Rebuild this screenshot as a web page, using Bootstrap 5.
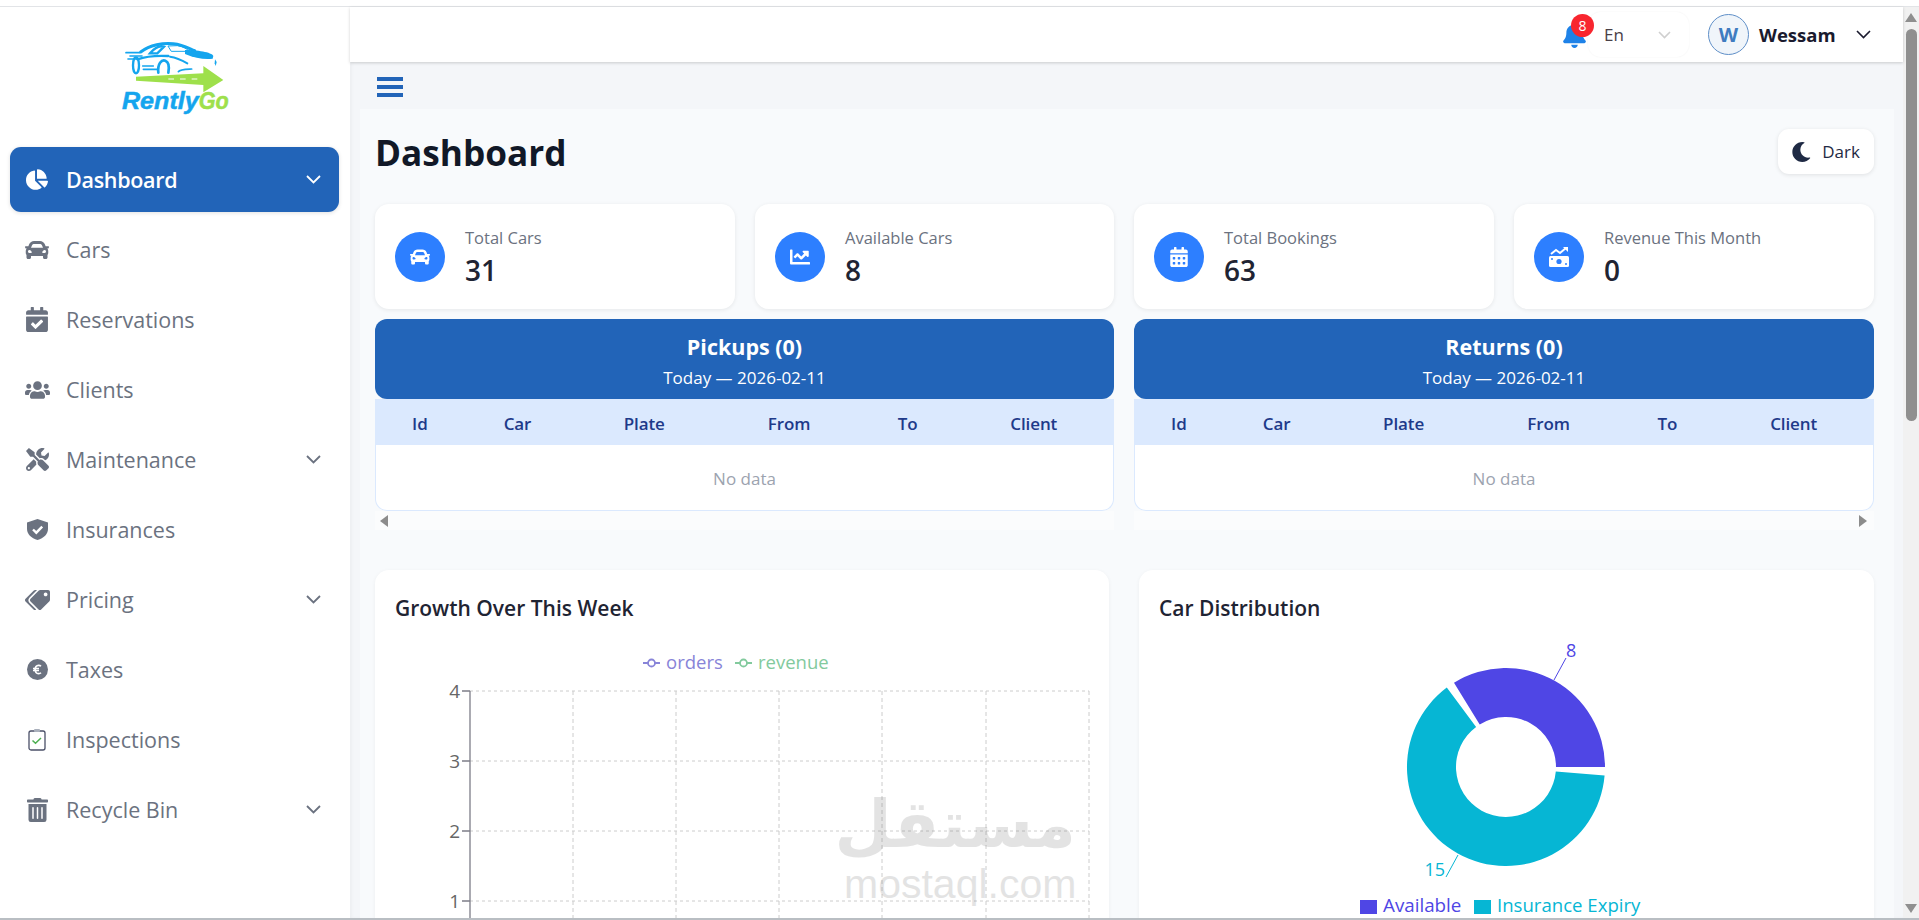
<!DOCTYPE html>
<html lang="en">
<head>
<meta charset="utf-8">
<title>RentlyGo Dashboard</title>
<link href="https://cdn.jsdelivr.net/npm/bootstrap@5.3.0/dist/css/bootstrap.min.css" rel="stylesheet">
<style>
html,body{height:920px;overflow:hidden;background:#fff}
body{font-family:"Open Sans","Noto Sans",sans-serif;color:#1f2433}
.frame-top{height:7px;border-bottom:1px solid #e2e4e7;background:#fff}
.frame-bottom{height:2px;background:#b9bec3}
.shell{height:911px}
.side{width:350px;background:#fff;flex:none}
.side-logo{height:140px;padding-top:23px}
.side-logo svg{display:block;margin:0 auto}
.side-menu{gap:5px;padding:0 11px 0 10px}
.side-link{height:65px;border-radius:11px;color:#6b7280;font-size:21.5px;font-weight:500;padding:0 18px 0 12px}
.side-link:hover{color:#6b7280}
.side-link .flex-grow-1{padding-top:1px}
.side-link.on,.side-link.on:hover{background:#2264b8;color:#fff;box-shadow:0 1px 4px rgba(0,0,0,.12);font-weight:600;letter-spacing:-.3px}
.side-ico{width:30px;height:30px;margin-right:14px;flex:none}
.side-ico svg{display:block}
.main-col{min-width:0;background:#f4f6f9;box-shadow:inset 2px 0 3px rgba(0,0,0,.03)}
.top-bar{height:55px;background:#fff;box-shadow:0 1px 3px rgba(0,0,0,.18);padding-right:32px;position:relative;z-index:2}
.bell-wrap{width:25px;height:26px;position:relative}
.bell-num{position:absolute;left:8px;top:-8px;width:23px;height:23px;border-radius:50%;background:#f8262f;color:#fff;font-size:14px;line-height:23px;text-align:center;z-index:3}
.lang-box{width:101px;height:45px;border-radius:13px;background:#fff;box-shadow:0 0 2px rgba(0,0,0,.06);padding:0 18px 0 16px;font-size:17px;color:#4a4047;margin-right:19px}
.user-ava{width:41px;height:41px;border-radius:50%;border:1.5px solid #5f8fc8;background:#f0f5fa;color:#3f7cc0;font-weight:700;font-size:20px;margin-right:10px}
.user-name{font-size:18.5px;font-weight:700;color:#1a1a2e;width:97px}
.burger-row{height:47px;padding:15px 0 0 27px}
.burger{width:26px;height:20px;gap:4px}
.burger i{display:block;height:4px;background:#2264b8}
.panel{margin:0 9px 0 10px;background:#f8fafc;padding:20px 20px 0 15px;height:809px;overflow:hidden}
.page-head{height:45px;margin-bottom:30px}
.page-title{font-size:35.2px;font-weight:700;color:#111827;margin:0;line-height:45px;padding:2px 0 0}
.mode-btn{width:96px;height:45px;border-radius:11px;background:#fff;border:0;box-shadow:0 1px 4px rgba(0,0,0,.1);font-size:17px;color:#1f2a44;gap:11px}
.stat-grid{display:grid;grid-template-columns:360px 359px 360px 360px;column-gap:20px;margin-bottom:10px}
.stat-box{height:105px;border:0;border-radius:14px;background:#fff;box-shadow:0 1px 4px rgba(0,0,0,.08);padding:0 20px;flex-direction:row;align-items:center}
.stat-ico{width:50px;height:50px;border-radius:50%;background:#2d7fff;margin-right:20px;flex:none}
.stat-label{font-size:16.5px;color:#6b7280;line-height:24px}
.stat-val{font-size:28px;font-weight:600;color:#1f2433;line-height:36px;margin-top:2px}
.today-grid{display:grid;grid-template-columns:739px 740px;column-gap:20px;margin-bottom:40px}
.today-head{height:80px;background:#2264b8;border-radius:12px;color:#fff;padding-top:14px}
.today-title{font-size:21.5px;font-weight:700;line-height:28px;margin:0}
.today-sub{font-size:17px;line-height:26px;margin-top:4px}
.today-wrap{background:#fff;border:1px solid #dbe9fe;border-top:0;border-radius:0 0 12px 12px;overflow:hidden;height:112px}
.today-table{table-layout:fixed;margin:0;width:100%}
.today-table th{height:46px;background:#dbe9fe;color:#1e3a8a;font-size:17px;font-weight:600;text-align:center;vertical-align:middle;border:0;padding:3px 0 0;letter-spacing:-.1px}
.today-table td{height:66px;text-align:center;vertical-align:middle;border:0;padding:1px 0 0;color:#9ca3af;font-size:17px}
.w-a{width:11.9%}.w-b{width:14.6%}.w-c{width:19.8%}.w-d{width:19.5%}.w-e{width:12.7%}.w-f{width:21.5%}
.hscroll{height:19px;background:#fbfcfd;padding:0 7px 0 5px}
.tri-l{width:0;height:0;border-style:solid;border-width:6px 8px 6px 0;border-color:transparent #8c8c8c transparent transparent}
.tri-r{width:0;height:0;border-style:solid;border-width:6px 0 6px 8px;border-color:transparent transparent transparent #8c8c8c}
.chart-grid{display:grid;grid-template-columns:734px 735px;column-gap:30px}
.chart-box{height:420px;border:0;border-radius:14px;background:#fff;box-shadow:0 1px 4px rgba(0,0,0,.05);position:relative;overflow:hidden}
.chart-title{font-size:21px;font-weight:600;color:#1f2433;line-height:28px;margin:0;padding:24px 0 0 20px;height:70px}
.chart-box svg text{font-family:"Open Sans","Noto Sans",sans-serif}
.wm{position:absolute;left:469px;top:227px;width:232px;text-align:center;color:#777;opacity:.2;pointer-events:none}
.wm-ar{font-family:"DejaVu Sans",sans-serif;font-weight:700;font-size:66px;line-height:56px;height:70px;white-space:nowrap;direction:rtl}
.wm-en{font-family:"Liberation Sans",sans-serif;font-size:41px;line-height:34px;white-space:nowrap}
.vscroll{width:16px;background:#f1f1f1;flex:none;padding:6px 0 5px}
.vbar{width:11px;height:392px;background:#8f8f8f;border-radius:6px;margin-top:7px}
.tri-u{width:0;height:0;border-style:solid;border-width:0 6px 9px 6px;border-color:transparent transparent #8f8f8f transparent}
.tri-d{width:0;height:0;border-style:solid;border-width:9px 6px 0 6px;border-color:#8f8f8f transparent transparent transparent}
</style>
</head>
<body>
<div class="frame-top"></div>
<div class="shell d-flex">
  <aside class="side">
    <div class="side-logo">
      <svg width="150" height="95" viewBox="0 0 450 285">
        <g fill="none" stroke="#14a5ee" stroke-linecap="round">
          <path d="M122 66C150 44 190 38 220 41C250 44 268 56 284 62" stroke-width="9"/>
          <path d="M150 70C165 52 180 46 192 50L172 70Z" stroke-width="7"/>
          <path d="M205 48L232 47C250 50 262 58 270 64L215 64Z" stroke-width="3"/>
          <ellipse cx="108" cy="106" rx="9" ry="24" stroke-width="7"/>
          <path d="M175 128C172 100 185 88 196 92C206 96 208 112 205 128" stroke-width="8"/>
          <path d="M78 68H118M90 78H126M84 87H112M130 118H172M128 108H160M235 125C240 118 255 118 275 117" stroke-width="5"/>
          <path d="M210 80C225 82 245 90 262 100" stroke-width="6"/>
          <path d="M112 88C135 80 170 76 205 78" stroke-width="7"/>
        </g>
        <path d="M255 60C290 60 335 66 340 78L338 86C315 90 285 84 255 72Z" fill="#14a5ee"/>
        <path d="M345 88L350 96L347 108L344 100Z" fill="#14a5ee"/>
        <path d="M108 140L310 130V108L370 150L310 187V165L108 152Z" fill="#9ee04b"/>
        <path d="M205 147H222M240 147H257M275 147H292" stroke="#fff" stroke-width="3"/>
        <text x="66" y="238" font-family="Liberation Sans, sans-serif" font-weight="700" font-style="italic" font-size="70" fill="#14a5ee" stroke="#14a5ee" stroke-width="1.500" textLength="230" lengthAdjust="spacingAndGlyphs">Rently</text>
        <text x="296" y="238" font-family="Liberation Sans, sans-serif" font-weight="700" font-style="italic" font-size="70" fill="#9ee04b" stroke="#9ee04b" stroke-width="1.500" textLength="90" lengthAdjust="spacingAndGlyphs">Go</text>
      </svg>
    </div>
    <nav class="nav flex-column flex-nowrap side-menu">
      <a class="nav-link side-link on d-flex align-items-center" href="#"><span class="side-ico d-flex align-items-center justify-content-center"><svg width="22" height="21" viewBox="0 0 544 512" fill="#fff"><path d="M527.79 288H290.5l158.03 158.03c6.04 6.04 15.98 6.53 22.19.68 38.7-36.46 65.32-85.61 73.13-140.86 1.34-9.46-6.51-17.85-16.06-17.85zm-15.83-64.8C503.72 103.74 408.26 8.28 288.8.04 279.68-.59 272 7.1 272 16.24V240h223.77c9.14 0 16.82-7.68 16.19-16.8zM224 288V50.71c0-9.55-8.39-17.4-17.84-16.06C86.99 51.49-4.1 155.6.14 280.37 4.5 408.51 114.83 513.59 243.03 511.98c50.4-.63 96.97-16.87 135.26-44.03 7.9-5.6 8.42-17.23 1.57-24.08L224 288z"/></svg></span><span class="flex-grow-1">Dashboard</span><svg width="15" height="9" viewBox="0 0 15 9" fill="none" stroke="#fff" stroke-width="1.8"><path d="M1 1l6.5 6.5L14 1"/></svg></a>
      <a class="nav-link side-link d-flex align-items-center" href="#"><span class="side-ico d-flex align-items-center justify-content-center"><svg width="24" height="24" viewBox="0 0 512 512" fill="#6b7280"><path d="M499.99 176h-59.87l-16.64-41.6C406.38 91.63 365.57 64 319.5 64h-127c-46.06 0-86.88 27.63-103.99 70.4L71.87 176H12.01C4.2 176-1.53 183.34.37 190.91l6 24C7.7 220.25 12.5 224 18.01 224h20.07C24.65 235.73 16 252.78 16 272v48c0 16.12 6.16 30.67 16 41.93V416c0 17.67 14.33 32 32 32h32c17.67 0 32-14.33 32-32v-32h256v32c0 17.67 14.33 32 32 32h32c17.67 0 32-14.33 32-32v-54.07c9.84-11.25 16-25.8 16-41.93v-48c0-19.22-8.65-36.27-22.07-48H494c5.51 0 10.31-3.75 11.64-9.09l6-24c1.89-7.57-3.84-14.91-11.65-14.91zm-352.06-17.83c7.29-18.22 24.94-30.17 44.57-30.17h127c19.63 0 37.28 11.95 44.57 30.17L384 208H128l19.93-49.83zM96 319.8c-19.2 0-32-12.76-32-31.9S76.8 256 96 256s48 28.71 48 47.85-28.8 15.95-48 15.95zm320 0c-19.2 0-48 3.19-48-15.95S396.8 256 416 256s32 12.76 32 31.9-12.8 31.9-32 31.9z"/></svg></span><span class="flex-grow-1">Cars</span></a>
      <a class="nav-link side-link d-flex align-items-center" href="#"><span class="side-ico d-flex align-items-center justify-content-center"><svg width="22" height="25" viewBox="0 0 448 512" fill="#6b7280"><path d="M436 160H12c-6.627 0-12-5.373-12-12v-36c0-26.51 21.49-48 48-48h48V12c0-6.627 5.373-12 12-12h40c6.627 0 12 5.373 12 12v52h128V12c0-6.627 5.373-12 12-12h40c6.627 0 12 5.373 12 12v52h48c26.51 0 48 21.49 48 48v36c0 6.627-5.373 12-12 12zM12 192h424c6.627 0 12 5.373 12 12v260c0 26.51-21.49 48-48 48H48c-26.51 0-48-21.49-48-48V204c0-6.627 5.373-12 12-12zm333.296 95.947l-28.169-28.398c-4.667-4.705-12.265-4.736-16.970-.068L194.12 364.665l-45.98-46.352c-4.667-4.705-12.266-4.736-16.971-.068l-28.397 28.17c-4.705 4.667-4.736 12.265-.068 16.970l82.601 83.269c4.667 4.705 12.265 4.736 16.970.068l142.953-141.805c4.705-4.667 4.736-12.265.068-16.970z"/></svg></span><span class="flex-grow-1">Reservations</span></a>
      <a class="nav-link side-link d-flex align-items-center" href="#"><span class="side-ico d-flex align-items-center justify-content-center"><svg width="25" height="20" viewBox="0 0 640 512" fill="#6b7280"><path d="M96 224c35.3 0 64-28.7 64-64s-28.7-64-64-64-64 28.7-64 64 28.7 64 64 64zm448 0c35.3 0 64-28.7 64-64s-28.7-64-64-64-64 28.7-64 64 28.7 64 64 64zm32 32h-64c-17.6 0-33.5 7.1-45.1 18.6 40.3 22.1 68.9 62 75.1 109.4h66c17.7 0 32-14.3 32-32v-32c0-35.3-28.7-64-64-64zm-256 0c61.9 0 112-50.1 112-112S381.9 32 320 32 208 82.1 208 144s50.1 112 112 112zm76.8 32h-8.3c-20.8 10-43.9 16-68.5 16s-47.6-6-68.5-16h-8.3C179.6 288 128 339.6 128 403.2V432c0 26.5 21.5 48 48 48h288c26.5 0 48-21.5 48-48v-28.8c0-63.6-51.6-115.2-115.2-115.2zm-223.7-13.4C161.5 263.1 145.6 256 128 256H64c-35.3 0-64 28.7-64 64v32c0 17.7 14.3 32 32 32h65.9c6.3-47.4 34.9-87.3 75.2-109.4z"/></svg></span><span class="flex-grow-1">Clients</span></a>
      <a class="nav-link side-link d-flex align-items-center" href="#"><span class="side-ico d-flex align-items-center justify-content-center"><svg width="23" height="23" viewBox="0 0 512 512" fill="#6b7280"><path d="M501.1 395.7L384 278.6c-23.1-23.1-57.6-27.6-85.4-13.9L192 158.1V96L64 0 0 64l96 128h62.1l106.6 106.6c-13.6 27.8-9.2 62.3 13.9 85.4l117.1 117.1c14.6 14.6 38.2 14.6 52.7 0l52.7-52.7c14.5-14.6 14.5-38.2 0-52.7zM331.7 225c28.3 0 54.9 11 74.9 31l19.4 19.4c15.8-6.9 30.8-16.5 43.8-29.5 37.1-37.1 49.7-89.3 37.9-136.7-2.2-9-13.5-12.1-20.1-5.5l-74.4 74.4-67.9-11.3L334 98.9l74.4-74.4c6.6-6.6 3.4-17.9-5.7-20.2-47.4-11.7-99.6.9-136.6 37.9-28.5 28.5-41.9 66.1-41.2 103.6l82.1 82.1c8.1-1.9 16.5-2.9 24.7-2.9zm-103.9 82l-56.7-56.7L18.7 402.8c-25 25-25 65.5 0 90.5s65.5 25 90.5 0l123.6-123.6c-7.6-19.9-9.9-41.6-5-62.7zM64 472c-13.2 0-24-10.8-24-24 0-13.3 10.7-24 24-24s24 10.7 24 24c0 13.2-10.7 24-24 24z"/></svg></span><span class="flex-grow-1">Maintenance</span><svg width="15" height="9" viewBox="0 0 15 9" fill="none" stroke="#6b7280" stroke-width="1.8"><path d="M1 1l6.5 6.5L14 1"/></svg></a>
      <a class="nav-link side-link d-flex align-items-center" href="#"><span class="side-ico d-flex align-items-center justify-content-center"><svg width="21" height="21" viewBox="0 0 21 21"><path d="M10.5 0L21 3.6V10C21 15 16.8 19 10.5 21C4.2 19 0 15 0 10V3.6Z" fill="#6b7280"/><path d="M6 10.5l3.3 3.2L15.2 7.6" fill="none" stroke="#fff" stroke-width="2.4"/></svg></span><span class="flex-grow-1">Insurances</span></a>
      <a class="nav-link side-link d-flex align-items-center" href="#"><span class="side-ico d-flex align-items-center justify-content-center"><svg width="25" height="20" viewBox="0 0 640 512" fill="#6b7280"><g transform="matrix(-1 0 0 1 640 0)"><path d="M497.941 225.941L286.059 14.059A48 48 0 0 0 252.118 0H48C21.49 0 0 21.49 0 48v204.118a48 48 0 0 0 14.059 33.941l211.882 211.882c18.744 18.745 49.136 18.746 67.882 0l204.118-204.118c18.745-18.745 18.745-49.137 0-67.882zM112 160c-26.51 0-48-21.49-48-48s21.49-48 48-48 48 21.49 48 48-21.49 48-48 48zm513.941 133.823L421.823 497.941c-18.745 18.745-49.137 18.745-67.882 0l-.36-.36L527.64 323.522c16.999-16.999 26.36-39.6 26.36-63.64s-9.362-46.641-26.36-63.64L331.397 0h48.721a48 48 0 0 1 33.941 14.059l211.882 211.882c18.745 18.745 18.745 49.137 0 67.882z"/></g></svg></span><span class="flex-grow-1">Pricing</span><svg width="15" height="9" viewBox="0 0 15 9" fill="none" stroke="#6b7280" stroke-width="1.8"><path d="M1 1l6.5 6.5L14 1"/></svg></a>
      <a class="nav-link side-link d-flex align-items-center" href="#"><span class="side-ico d-flex align-items-center justify-content-center"><svg width="21" height="21" viewBox="0 0 21 21"><circle cx="10.5" cy="10.5" r="10.5" fill="#6b7280"/><path d="M14 7.2C12.8 6 10.2 6 9 7.6C7.8 9.2 7.8 11.8 9 13.4C10.2 15 12.8 15 14 13.8M6 9.5H12M6 11.5H12" fill="none" stroke="#fff" stroke-width="1.6"/></svg></span><span class="flex-grow-1">Taxes</span></a>
      <a class="nav-link side-link d-flex align-items-center" href="#"><span class="side-ico d-flex align-items-center justify-content-center"><svg width="18" height="23" viewBox="0 0 18 23"><rect x="1" y="3" width="16" height="19" rx="2" fill="#fff" stroke="#4b5068" stroke-width="1.3"/><rect x="6" y="1" width="6" height="3" rx="1" fill="#aab0bc"/><path d="M4.5 12.5l3 2.8 5.5-5.3" fill="none" stroke="#4caf50" stroke-width="1.5"/></svg></span><span class="flex-grow-1">Inspections</span></a>
      <a class="nav-link side-link d-flex align-items-center" href="#"><span class="side-ico d-flex align-items-center justify-content-center"><svg width="21" height="24" viewBox="0 0 448 512" fill="#6b7280"><path d="M32 464a48 48 0 0 0 48 48h288a48 48 0 0 0 48-48V128H32zm272-256a16 16 0 0 1 32 0v224a16 16 0 0 1-32 0zm-96 0a16 16 0 0 1 32 0v224a16 16 0 0 1-32 0zm-96 0a16 16 0 0 1 32 0v224a16 16 0 0 1-32 0zM432 32H312l-9.4-18.7A24 24 0 0 0 281.1 0H166.8a23.72 23.72 0 0 0-21.4 13.3L136 32H16A16 16 0 0 0 0 48v32a16 16 0 0 0 16 16h416a16 16 0 0 0 16-16V48a16 16 0 0 0-16-16z"/></svg></span><span class="flex-grow-1">Recycle Bin</span><svg width="15" height="9" viewBox="0 0 15 9" fill="none" stroke="#6b7280" stroke-width="1.8"><path d="M1 1l6.5 6.5L14 1"/></svg></a>
    </nav>
  </aside>
  <div class="main-col flex-grow-1">
    <header class="top-bar d-flex align-items-center justify-content-end">
      <div class="bell-wrap"><svg width="23" height="26" viewBox="0 0 448 512" fill="#1e82e8"><path d="M224 512c35.32 0 63.97-28.65 63.97-64H160.03c0 35.35 28.65 64 63.97 64zm215.39-149.71c-19.32-20.76-55.47-51.99-55.47-154.29 0-77.7-54.48-139.9-127.94-155.16V32c0-17.67-14.32-32-31.98-32s-31.98 14.33-31.98 32v20.84C118.56 68.1 64.08 130.3 64.08 208c0 102.3-36.15 133.53-55.47 154.29-6 6.45-8.66 14.16-8.61 21.71.11 16.4 12.98 32 32.1 32h383.8c19.12 0 32-15.6 32.1-32 .05-7.55-2.61-15.27-8.61-21.71z"/></svg><span class="bell-num">8</span></div>
      <div class="lang-box d-flex align-items-center justify-content-between"><span>En</span><svg width="13" height="8" viewBox="0 0 13 8" fill="none" stroke="#cfcfcf" stroke-width="1.6"><path d="M1 1l5.5 5.5L12 1"/></svg></div>
      <div class="user-ava d-flex align-items-center justify-content-center">W</div>
      <div class="user-name">Wessam</div>
      <svg width="15" height="9" viewBox="0 0 15 9" fill="none" stroke="#1a1a2e" stroke-width="1.6"><path d="M1 1l6.5 6.5L14 1"/></svg>
    </header>
    <div class="burger-row"><div class="burger d-flex flex-column"><i></i><i></i><i></i></div></div>
    <main class="panel">
      <div class="page-head d-flex align-items-center justify-content-between">
        <h1 class="page-title">Dashboard</h1>
        <button class="mode-btn d-flex align-items-center justify-content-center" type="button"><svg width="19" height="20" viewBox="27 0 470 512" fill="#1f2a44"><path d="M283.211 512c78.962 0 151.079-35.925 198.857-94.792 7.068-8.708-.639-21.43-11.562-19.35-124.203 23.654-238.262-71.576-238.262-196.954 0-72.222 38.662-138.635 101.498-174.394 9.686-5.512 7.25-20.197-3.756-22.23A258.156 258.156 0 0 0 283.211 0c-141.309 0-256 114.511-256 256 0 141.309 114.511 256 256 256z"/></svg><span>Dark</span></button>
      </div>
      <section class="stat-grid">
        <div class="card stat-box"><div class="stat-ico d-flex align-items-center justify-content-center"><svg width="20" height="20" viewBox="0 0 512 512" fill="#fff"><path d="M499.99 176h-59.87l-16.64-41.6C406.38 91.63 365.57 64 319.5 64h-127c-46.06 0-86.88 27.63-103.99 70.4L71.87 176H12.01C4.2 176-1.53 183.34.37 190.91l6 24C7.7 220.25 12.5 224 18.01 224h20.07C24.65 235.73 16 252.78 16 272v48c0 16.12 6.16 30.67 16 41.93V416c0 17.67 14.33 32 32 32h32c17.67 0 32-14.33 32-32v-32h256v32c0 17.67 14.33 32 32 32h32c17.67 0 32-14.33 32-32v-54.07c9.84-11.25 16-25.8 16-41.93v-48c0-19.22-8.65-36.27-22.07-48H494c5.51 0 10.31-3.75 11.64-9.09l6-24c1.89-7.57-3.84-14.91-11.65-14.91zm-352.06-17.83c7.29-18.22 24.94-30.17 44.57-30.17h127c19.63 0 37.28 11.95 44.57 30.17L384 208H128l19.93-49.83zM96 319.8c-19.2 0-32-12.76-32-31.9S76.8 256 96 256s48 28.71 48 47.85-28.8 15.95-48 15.95zm320 0c-19.2 0-48 3.19-48-15.95S396.8 256 416 256s32 12.76 32 31.9-12.8 31.9-32 31.9z"/></svg></div><div><div class="stat-label">Total Cars</div><div class="stat-val">31</div></div></div>
        <div class="card stat-box"><div class="stat-ico d-flex align-items-center justify-content-center"><svg width="20" height="20" viewBox="0 0 512 512" fill="#fff"><path d="M496 384H64V80c0-8.84-7.16-16-16-16H16C7.16 64 0 71.16 0 80v336c0 17.67 14.33 32 32 32h464c8.84 0 16-7.16 16-16v-32c0-8.84-7.16-16-16-16zM464 96H345.94c-21.38 0-32.09 25.85-16.97 40.97l32.4 32.4L288 242.75l-73.37-73.37c-12.5-12.5-32.76-12.5-45.25 0l-68.69 68.69c-6.25 6.25-6.25 16.38 0 22.63l22.62 22.62c6.25 6.25 16.38 6.25 22.63 0L192 237.25l73.37 73.37c12.5 12.5 32.76 12.5 45.25 0l96-96 32.4 32.4c15.12 15.12 40.97 4.41 40.97-16.97V112c.01-8.84-7.15-16-15.99-16z"/></svg></div><div><div class="stat-label">Available Cars</div><div class="stat-val">8</div></div></div>
        <div class="card stat-box"><div class="stat-ico d-flex align-items-center justify-content-center"><svg width="18" height="20" viewBox="0 0 448 512" fill="#fff"><path d="M0 464c0 26.5 21.5 48 48 48h352c26.5 0 48-21.5 48-48V192H0v272zm320-196c0-6.6 5.4-12 12-12h40c6.6 0 12 5.4 12 12v40c0 6.6-5.4 12-12 12h-40c-6.6 0-12-5.4-12-12v-40zm0 128c0-6.6 5.4-12 12-12h40c6.6 0 12 5.4 12 12v40c0 6.6-5.4 12-12 12h-40c-6.6 0-12-5.4-12-12v-40zM192 268c0-6.6 5.4-12 12-12h40c6.6 0 12 5.4 12 12v40c0 6.6-5.4 12-12 12h-40c-6.6 0-12-5.4-12-12v-40zm0 128c0-6.6 5.4-12 12-12h40c6.6 0 12 5.4 12 12v40c0 6.6-5.4 12-12 12h-40c-6.6 0-12-5.4-12-12v-40zM64 268c0-6.6 5.4-12 12-12h40c6.6 0 12 5.4 12 12v40c0 6.6-5.4 12-12 12H76c-6.6 0-12-5.4-12-12v-40zm0 128c0-6.6 5.4-12 12-12h40c6.6 0 12 5.4 12 12v40c0 6.6-5.4 12-12 12H76c-6.6 0-12-5.4-12-12v-40zM400 64h-48V16c0-8.8-7.2-16-16-16h-32c-8.8 0-16 7.2-16 16v48H160V16c0-8.8-7.2-16-16-16h-32c-8.8 0-16 7.2-16 16v48H48C21.5 64 0 85.5 0 112v48h448v-48c0-26.5-21.5-48-48-48z"/></svg></div><div><div class="stat-label">Total Bookings</div><div class="stat-val">63</div></div></div>
        <div class="card stat-box"><div class="stat-ico d-flex align-items-center justify-content-center"><svg width="20" height="20" viewBox="0 0 20 20"><rect x="0" y="9" width="20" height="11" rx="1.5" fill="#fff"/><circle cx="10" cy="14.5" r="2.6" fill="#2d7fff"/><circle cx="3" cy="12" r="1" fill="#2d7fff"/><circle cx="17" cy="17" r="1" fill="#2d7fff"/><path d="M2 7L7 3L11 6L17 1" fill="none" stroke="#fff" stroke-width="2"/><path d="M14 0H19V5Z" fill="#fff"/></svg></div><div><div class="stat-label">Revenue This Month</div><div class="stat-val">0</div></div></div>
      </section>
      <section class="today-grid">
        <div>
          <div class="today-head text-center"><h2 class="today-title">Pickups (0)</h2><div class="today-sub">Today — 2026-02-11</div></div>
          <div class="today-wrap"><table class="table today-table"><colgroup><col class="w-a"><col class="w-b"><col class="w-c"><col class="w-d"><col class="w-e"><col class="w-f"></colgroup><thead><tr><th>Id</th><th>Car</th><th>Plate</th><th>From</th><th>To</th><th>Client</th></tr></thead><tbody><tr><td colspan="6">No data</td></tr></tbody></table></div>
          <div class="hscroll d-flex align-items-center"><span class="tri-l"></span></div>
        </div>
        <div>
          <div class="today-head text-center"><h2 class="today-title">Returns (0)</h2><div class="today-sub">Today — 2026-02-11</div></div>
          <div class="today-wrap"><table class="table today-table"><colgroup><col class="w-a"><col class="w-b"><col class="w-c"><col class="w-d"><col class="w-e"><col class="w-f"></colgroup><thead><tr><th>Id</th><th>Car</th><th>Plate</th><th>From</th><th>To</th><th>Client</th></tr></thead><tbody><tr><td colspan="6">No data</td></tr></tbody></table></div>
          <div class="hscroll d-flex align-items-center justify-content-end"><span class="tri-r"></span></div>
        </div>
      </section>
      <section class="chart-grid">
        <div class="card chart-box">
          <h3 class="chart-title">Growth Over This Week</h3>
          <svg width="734" height="280" viewBox="0 0 734 280" class="d-block">
            <g stroke="#ccc" fill="none">
              <path stroke-dasharray="3 3" d="M95 51H714M95 121H714M95 191H714M95 261H714"/>
              <path stroke-dasharray="4 3" d="M198 51V280M301 51V280M404 51V280M507 51V280M611 51V280M714 51V280"/>
            </g>
            <path d="M95 51V280M87 51H95M87 121H95M87 191H95M87 261H95" stroke="#7d7d88" stroke-width="1.3" fill="none"/>
            <g font-size="19" fill="#666" text-anchor="end"><text x="85" y="58">4</text><text x="85" y="128">3</text><text x="85" y="198">2</text><text x="85" y="268">1</text></g>
            <g fill="none" stroke="#8884d8" stroke-width="1.8"><path d="M268 23H285"/><circle cx="276.500" cy="23" r="3.500" fill="#fff"/></g>
            <text x="291" y="29" font-size="18.500" fill="#8884d8">orders</text>
            <g fill="none" stroke="#82ca9d" stroke-width="1.8"><path d="M360 23H377"/><circle cx="368.500" cy="23" r="3.500" fill="#fff"/></g>
            <text x="383" y="29" font-size="18.500" fill="#82ca9d">revenue</text>
          </svg>
          <div class="wm"><div class="wm-ar">مستقل</div><div class="wm-en">mostaql.com</div></div>
        </div>
        <div class="card chart-box">
          <h3 class="chart-title">Car Distribution</h3>
          <svg width="735" height="280" viewBox="0 0 735 280" class="d-block">
            <path d="M466 127A99 99 0 0 0 315 42.800L340.700 84.500A50 50 0 0 1 417 127Z" fill="#4f46e5"/>
            <path d="M307.800 47.600A99 99 0 1 0 465.600 135.600L416.800 131.400A50 50 0 1 1 337.100 86.900Z" fill="#06b6d4"/>
            <path d="M415 40L427 18" stroke="#4f46e5" fill="none"/>
            <path d="M319 215L307 237" stroke="#06b6d4" fill="none"/>
            <text x="427" y="17" font-size="18" fill="#4f46e5">8</text>
            <text x="306" y="236" font-size="18" fill="#06b6d4" text-anchor="end">15</text>
            <rect x="221" y="260" width="17" height="14" fill="#4f46e5"/>
            <text x="244" y="272" font-size="18.800" fill="#4f46e5">Available</text>
            <rect x="335" y="260" width="17" height="14" fill="#06b6d4"/>
            <text x="358" y="272" font-size="18.600" fill="#06b6d4">Insurance Expiry</text>
          </svg>
        </div>
      </section>
    </main>
  </div>
  <div class="vscroll d-flex flex-column align-items-center">
    <span class="tri-u"></span>
    <div class="vbar flex-shrink-0"></div>
    <span class="tri-d mt-auto"></span>
  </div>
</div>
<div class="frame-bottom"></div>
<script src="https://cdn.jsdelivr.net/npm/bootstrap@5.3.0/dist/js/bootstrap.bundle.min.js"></script>
</body>
</html>
